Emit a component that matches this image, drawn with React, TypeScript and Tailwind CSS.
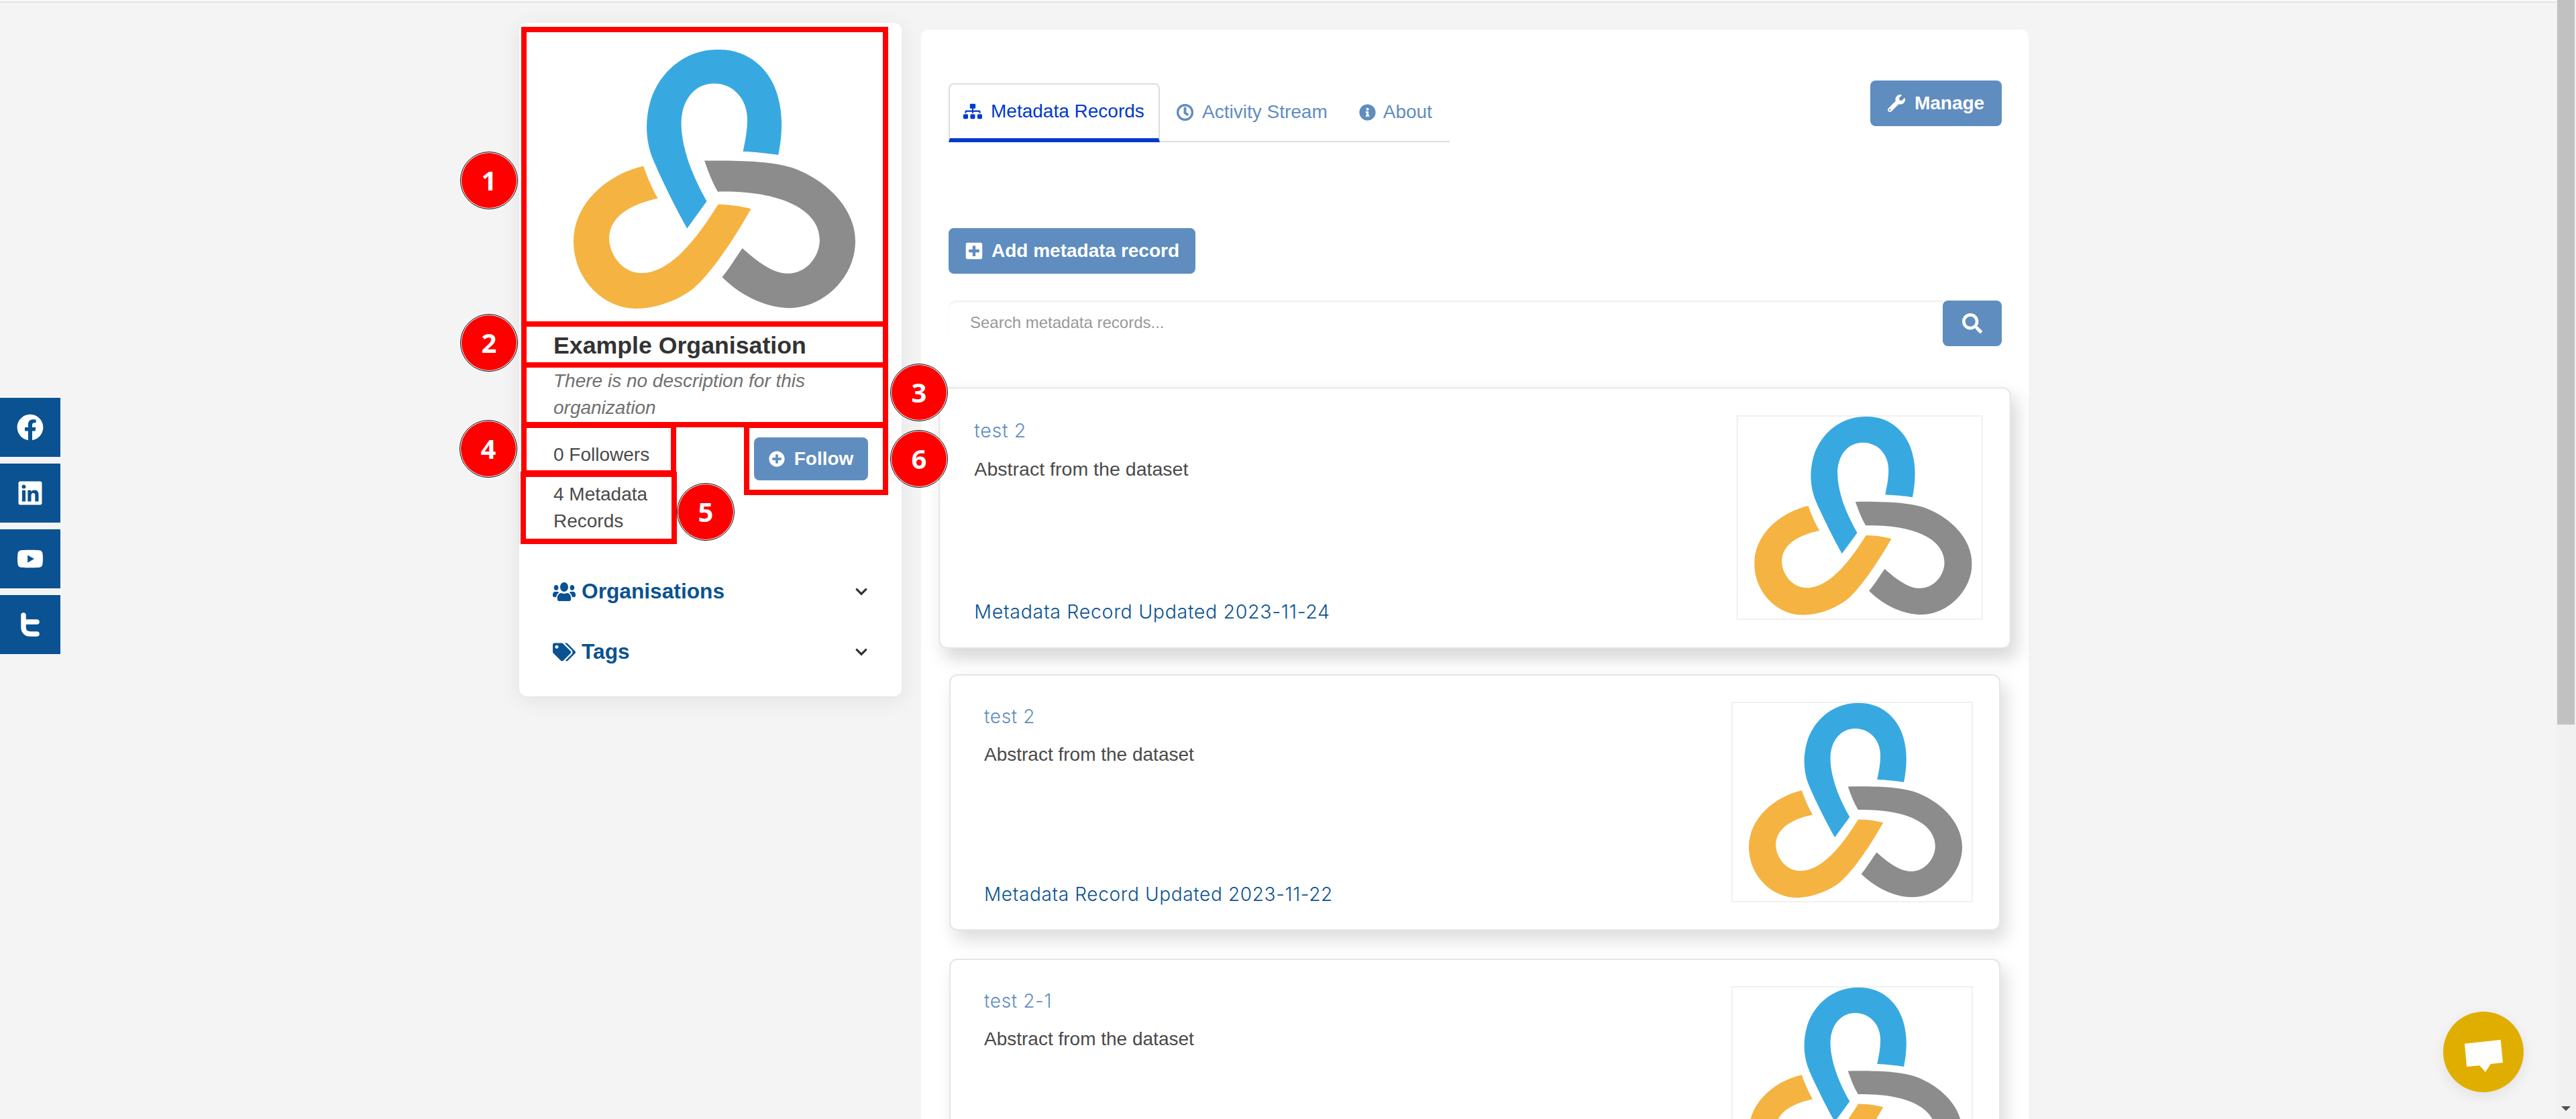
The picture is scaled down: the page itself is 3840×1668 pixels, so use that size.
import React from 'react';
import {
  FaChevronDown,
  FaFacebook,
  FaInfoCircle,
  FaLinkedin,
  FaPlusCircle,
  FaPlusSquare,
  FaRegClock,
  FaSearch,
  FaSitemap,
  FaTags,
  FaUsers,
  FaWrench,
  FaYoutube,
} from 'react-icons/fa';

const Logo: React.FC<{ className?: string }> = ({ className }) => (
  <svg viewBox="225 92 973 888" preserveAspectRatio="none" className={className}>
    <path
      fill="#38a9e0"
      d="M932 453 C945 390 950 320 930 250 C905 160 830 92 730 92 C610 88 520 170 490 270 C470 340 475 410 500 470 C530 540 580 640 617 705 L685 612 C650 550 600 450 597 350 C595 270 640 208 710 208 C780 208 825 265 825 330 C825 370 818 405 810 441 C850 443 895 447 932 453 Z"
    />
    <path
      fill="#f5b342"
      d="M466 491 C340 520 225 620 225 750 C225 880 330 980 440 980 C510 980 590 950 640 910 C700 860 780 740 838 638 C800 628 760 623 724 623 C670 710 570 858 460 858 C390 858 348 790 348 740 C348 660 430 620 516 602 C497 570 480 530 466 491 Z"
    />
    <path
      fill="#8c8c8c"
      d="M677 473 C780 472 900 472 980 497 C1090 535 1198 630 1198 750 C1198 870 1090 978 970 978 C880 978 790 925 738 872 C765 840 785 805 808 773 C860 820 915 860 965 860 C1030 860 1075 800 1075 745 C1075 650 960 575 723 579 C703 545 690 510 677 473 Z"
    />
  </svg>
);

const records = [
  { title: 'test 2', updated: 'Metadata Record Updated 2023-11-24', hovered: true },
  { title: 'test 2', updated: 'Metadata Record Updated 2023-11-22', hovered: false },
  { title: 'test 2-1', updated: '', hovered: false },
];

const RecordCard: React.FC<{ title: string; updated: string; hovered: boolean }> = ({ title, updated, hovered }) => (
  <div
    className={
      hovered
        ? 'flex h-[382px] justify-between rounded-xl border-2 border-[#e6e6e6] bg-white pl-[50px] pr-[39px] shadow-[8px_14px_26px_rgba(0,0,0,0.16)] scale-[1.02]'
        : 'flex h-[382px] justify-between rounded-xl border-2 border-[#e6e6e6] bg-white pl-[50px] pr-[39px] shadow-[8px_14px_26px_rgba(0,0,0,0.14)]'
    }
  >
    <div className="flex flex-col pt-[41px] pb-[32px]">
      <a className="font-['Inter',sans-serif] text-[28px] font-light leading-[40px] tracking-[0.65px] text-[#5f8dbf]">{title}</a>
      <p className="mt-[17px] text-[28px] leading-[40px] text-[#4a4a4a]">Abstract from the dataset</p>
      {updated && (
        <a className="mt-auto font-['Inter',sans-serif] text-[28px] font-light leading-[40px] tracking-[0.65px] text-[#0a5291]">
          {updated}
        </a>
      )}
    </div>
    <div className="mt-[39px] h-[299px] w-[360px] overflow-hidden border-2 border-[#f0f0f0] pl-[24px]">
      <Logo className="h-[290px] w-[318px]" />
    </div>
  </div>
);

const annotationBoxes = [
  'left-[777px] top-[40px] h-[447px] w-[547px]',
  'left-[777px] top-[479px] h-[69px] w-[547px]',
  'left-[777px] top-[540px] h-[97px] w-[547px]',
  'left-[777px] top-[630px] h-[79px] w-[231px]',
  'left-[776px] top-[703px] h-[108px] w-[233px]',
  'left-[1109px] top-[630px] h-[108px] w-[215px]',
];

const annotationBadges = [
  { n: 1, pos: 'left-[687px] top-[227px]' },
  { n: 2, pos: 'left-[687px] top-[469px]' },
  { n: 3, pos: 'left-[1328px] top-[543px]' },
  { n: 4, pos: 'left-[686px] top-[627px]' },
  { n: 5, pos: 'left-[1010px] top-[721px]' },
  { n: 6, pos: 'left-[1328px] top-[642px]' },
];

export default function App() {
  return (
    <div className="relative flex h-[1668px] w-[3840px] overflow-hidden bg-[#f4f4f4] font-['Liberation_Sans',Arial,sans-serif] text-[#333333]">
      <div className="flex w-[3810px] flex-col">
        {/* top rule */}
        <div className="h-[4px] border-b-2 border-[#dfe5ec] bg-[#fafafa]" />

        <div className="flex items-start gap-[29px] pl-[774px]">
          {/* Organisation sidebar */}
          <aside className="mt-[30px] h-[1004px] w-[570px] rounded-xl bg-white shadow-[0_6px_30px_rgba(0,0,0,0.08)]">
            <div className="pl-[81px] pt-[40px]">
              <Logo className="h-[386px] w-[420px]" />
            </div>
            <h1 className="mt-[30px] pl-[51px] text-[35.7px] font-bold leading-[50px]">Example Organisation</h1>
            <p className="mt-[8px] pl-[51px] pr-[50px] text-[28px] italic leading-[40px] text-[#707070]">
              There is no description for this organization
            </p>
            <div className="mt-[24px] flex items-start justify-between pl-[51px] pr-[50px]">
              <div className="w-[180px] pt-[6px] text-[28px] leading-[40px] text-[#4a4a4a]">
                <div>0 Followers</div>
                <div className="mt-[19px]">4 Metadata Records</div>
              </div>
              <button className="flex h-[64px] w-[170px] items-center justify-center gap-[14px] rounded-lg bg-[#5f8dbf] text-[28px] font-bold text-white">
                <FaPlusCircle size={24} />
                Follow
              </button>
            </div>
            <div className="mt-[55px] flex h-[60px] items-center justify-between pl-[50px] pr-[50px] text-[#0a5291]">
              <span className="flex items-center gap-[9px] text-[31.7px] font-bold">
                <FaUsers preserveAspectRatio="none" className="h-[32px] w-[34px]" />
                Organisations
              </span>
              <FaChevronDown size={20} className="text-[#333333]" />
            </div>
            <div className="mt-[30px] flex h-[60px] items-center justify-between pl-[50px] pr-[50px] text-[#0a5291]">
              <span className="flex items-center gap-[9px] text-[31.7px] font-bold">
                <FaTags size={34} />
                Tags
              </span>
              <FaChevronDown size={20} className="text-[#333333]" />
            </div>
          </aside>

          {/* Records panel */}
          <main className="mt-[40px] h-[1624px] w-[1651px] rounded-t-xl bg-white pl-[41px] pr-[40px] pt-[76px]">
            <div className="flex items-start justify-between">
              <nav className="mt-[4px] flex h-[88px] w-[747px] border-b-2 border-[#dddddd] text-[28px]">
                <a className="-mb-[2px] flex h-[88px] w-[315px] items-center gap-[13px] rounded-t-lg border-x-2 border-t-2 border-b-[6px] border-x-[#dddddd] border-t-[#dddddd] border-b-[#0039cb] pl-[20px] text-[#0039cb]">
                  <FaSitemap size={28} />
                  Metadata Records
                </a>
                <a className="flex items-center gap-[13px] pl-[25px] text-[#5f8dbf]">
                  <FaRegClock size={25} strokeWidth={22} />
                  Activity Stream
                </a>
                <a className="flex items-center gap-[11px] pl-[47px] text-[#5f8dbf]">
                  <FaInfoCircle size={25} />
                  About
                </a>
              </nav>
              <button className="flex h-[68px] w-[196px] items-center justify-center gap-[14px] rounded-lg bg-[#5f8dbf] text-[28px] font-bold text-white">
                <FaWrench size={26} />
                Manage
              </button>
            </div>

            <button className="mt-[128px] flex h-[68px] w-[368px] items-center justify-center gap-[12px] rounded-lg bg-[#5f8dbf] text-[28px] font-bold text-white">
              <FaPlusSquare size={28} />
              Add metadata record
            </button>

            <div className="mt-[40px] flex h-[68px]">
              <input
                placeholder="Search metadata records..."
                className="h-full flex-1 rounded-l-xl bg-white pl-[32px] pb-[2px] text-[24px] shadow-[inset_0_2px_2px_rgba(0,0,0,0.07)] outline-none placeholder:text-[#999999]"
              />
              <button className="flex w-[88px] items-center justify-center rounded-lg bg-[#5f8dbf] text-white">
                <FaSearch size={30} />
              </button>
            </div>

            <div className="ml-px mt-[65px] flex w-[1567px] flex-col gap-[42px]">
              {records.map((r, i) => (
                <RecordCard key={i} title={r.title} updated={r.updated} hovered={r.hovered} />
              ))}
            </div>
          </main>
        </div>
      </div>

      {/* Scrollbar */}
      <div className="flex w-[30px] flex-col items-center bg-[#f1f1f1]">
        <div className="h-[1080px] w-[26px] bg-[#c1c1c1]" />
        <div className="mt-auto mb-[12px] h-0 w-0 border-x-[7px] border-t-[7px] border-x-transparent border-t-[#505050]" />
      </div>

      {/* Social rail */}
      <div className="absolute left-0 top-[593px] flex flex-col gap-[10px] text-white">
        <a className="flex h-[88px] w-[90px] items-center justify-center bg-[#0a5291]"><FaFacebook size={40} /></a>
        <a className="flex h-[88px] w-[90px] items-center justify-center bg-[#0a5291]"><FaLinkedin size={40} /></a>
        <a className="flex h-[88px] w-[90px] items-center justify-center bg-[#0a5291]"><FaYoutube size={40} /></a>
        <a className="flex h-[88px] w-[90px] items-center justify-center bg-[#0a5291]">
          <svg viewBox="0 0 36 36" className="h-[36px] w-[36px]" fill="none" stroke="currentColor" strokeWidth="7.5" strokeLinecap="round" strokeLinejoin="round">
            <path d="M8 4 V22 C8 28 12 32 18 32 H28 M8 14 H28" />
          </svg>
        </a>
      </div>

      {/* Chat launcher */}
      <button className="absolute left-[3642px] top-[1508px] flex h-[120px] w-[120px] items-center justify-center rounded-full bg-[#e0ae00] shadow-[0_6px_20px_rgba(0,0,0,0.08)]">
        <svg viewBox="338 288 171 144" className="mt-[12px] h-[48px] w-[57px]" fill="#ffffff">
          <polygon points="338,305 499,288 509,390 454,396 431,432 405,403 347,408" />
        </svg>
      </button>

      {/* Annotation overlays */}
      {annotationBoxes.map((pos) => (
        <div key={pos} className={`absolute border-[8px] border-[#ff0000] ${pos}`} />
      ))}
      {annotationBadges.map((b) => (
        <div
          key={b.n}
          className={`absolute flex h-[84px] w-[84px] items-center justify-center rounded-full border-[1.5px] border-white bg-[#ff0000] font-['Open_Sans',sans-serif] text-[40px] font-bold text-white outline outline-1 outline-black ${b.pos}`}
        >
          {b.n}
        </div>
      ))}
    </div>
  );
}
